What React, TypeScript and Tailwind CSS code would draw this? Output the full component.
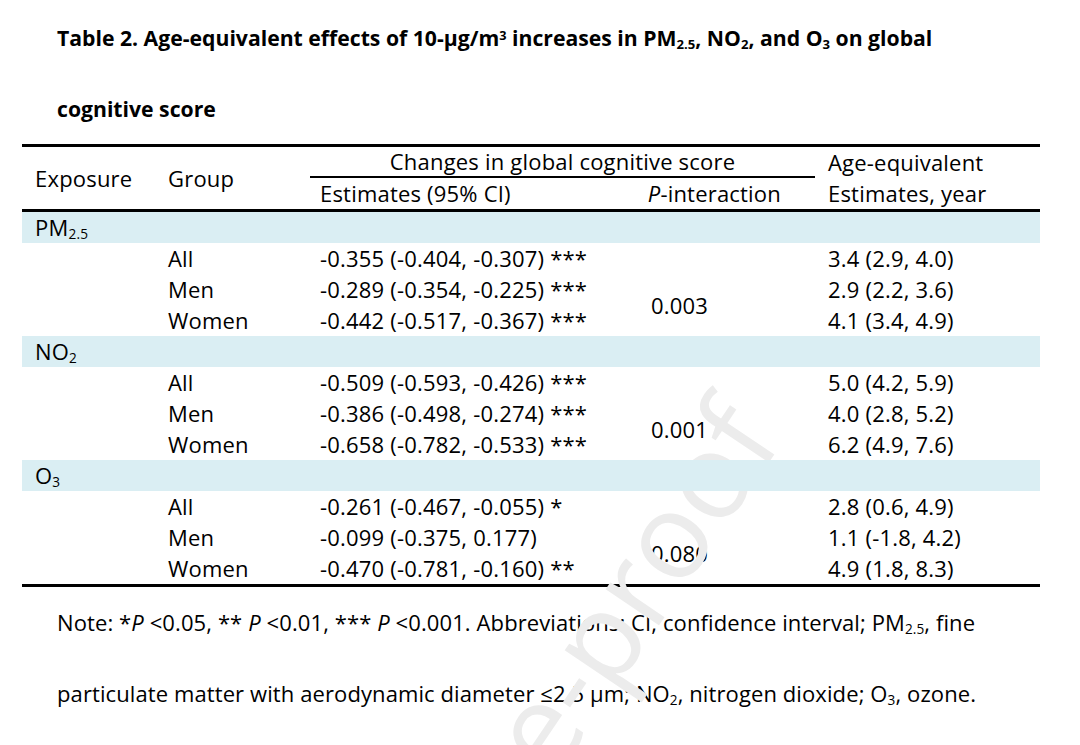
import React from "react";

const COLS = "grid grid-cols-[133px_150px_332px_178px_225px]";

type Row = { g: string; est: string; age: string };
type Section = { label: React.ReactNode; p: string; rows: Row[] };

const sections: Section[] = [
  {
    label: (
      <>
        PM<sub className="text-[0.62em]">2.5</sub>
      </>
    ),
    p: "0.003",
    rows: [
      { g: "All", est: "-0.355 (-0.404, -0.307) ***", age: "3.4 (2.9, 4.0)" },
      { g: "Men", est: "-0.289 (-0.354, -0.225) ***", age: "2.9 (2.2, 3.6)" },
      { g: "Women", est: "-0.442 (-0.517, -0.367) ***", age: "4.1 (3.4, 4.9)" },
    ],
  },
  {
    label: (
      <>
        NO<sub className="text-[0.62em]">2</sub>
      </>
    ),
    p: "0.001",
    rows: [
      { g: "All", est: "-0.509 (-0.593, -0.426) ***", age: "5.0 (4.2, 5.9)" },
      { g: "Men", est: "-0.386 (-0.498, -0.274) ***", age: "4.0 (2.8, 5.2)" },
      { g: "Women", est: "-0.658 (-0.782, -0.533) ***", age: "6.2 (4.9, 7.6)" },
    ],
  },
  {
    label: (
      <>
        O<sub className="text-[0.62em]">3</sub>
      </>
    ),
    p: "0.080",
    rows: [
      { g: "All", est: "-0.261 (-0.467, -0.055) *", age: "2.8 (0.6, 4.9)" },
      { g: "Men", est: "-0.099 (-0.375, 0.177)", age: "1.1 (-1.8, 4.2)" },
      { g: "Women", est: "-0.470 (-0.781, -0.160) **", age: "4.9 (1.8, 8.3)" },
    ],
  },
];

const ROW_START = ["row-start-2", "row-start-3", "row-start-4"];

function SectionBlock({ s }: { s: Section }) {
  return (
    <div className={`${COLS} grid-rows-[31px_31px_31px_31px]`}>
      <div className="relative z-20 col-span-5 row-start-1 bg-[#daeef3] pl-[13px] flex items-center">
        <span>{s.label}</span>
      </div>
      {s.rows.map((r, i) => (
        <React.Fragment key={r.g}>
          <div className={`col-start-2 pl-[13px] flex items-center ${ROW_START[i]}`}>
            {r.g}
          </div>
          <div
            className={`col-start-3 pl-[15px] flex items-center whitespace-nowrap ${ROW_START[i]}`}
          >
            {r.est}
          </div>
          <div
            className={`col-start-5 pl-[13px] flex items-center whitespace-nowrap ${ROW_START[i]}`}
          >
            {r.age}
          </div>
        </React.Fragment>
      ))}
      <div className="col-start-4 row-start-3 row-span-2 pl-[14px] flex items-center">
        {s.p}
      </div>
    </div>
  );
}

export default function App() {
  return (
    <div className="relative w-[1080px] h-[745px] overflow-hidden bg-white text-black font-['Open_Sans',sans-serif]">
      {/* Title */}
      <div className="pl-[57px] pt-[2px] text-[21.2px] font-bold leading-[71px] whitespace-nowrap">
        <div>
          Table 2. Age-equivalent effects of 10-μg/m
          <sup className="text-[0.6em]">3</sup> increases in PM
          <sub className="text-[0.62em]">2.5</sub>, NO
          <sub className="text-[0.62em]">2</sub>, and O
          <sub className="text-[0.62em]">3</sub> on global
        </div>
        <div>cognitive score</div>
      </div>

      {/* Table */}
      <div className="ml-[22px] w-[1018px] text-[22px] tracking-[0.2px] leading-[31px] border-t-[3px] border-black">
        <div className={`${COLS} grid-rows-[31px_31px] border-b-[3px] border-black`}>
          <div className="row-span-2 pl-[13px] flex items-center">Exposure</div>
          <div className="row-span-2 pl-[13px] flex items-center">Group</div>
          <div className="col-span-2 ml-[5px] border-b-[2px] border-black text-center flex items-center justify-center">
            Changes in global cognitive score
          </div>
          <div className="pl-[13px] flex items-center">Age-equivalent</div>
          <div className="col-start-3 row-start-2 pl-[15px] flex items-center">
            Estimates (95% CI)
          </div>
          <div className="col-start-4 row-start-2 pr-[34px] flex items-center justify-end">
            <span>
              <i>P</i>-interaction
            </span>
          </div>
          <div className="col-start-5 row-start-2 pl-[13px] flex items-center">
            Estimates, year
          </div>
        </div>
        {sections.map((s, i) => (
          <SectionBlock key={i} s={s} />
        ))}
        <div className="border-t-[3px] border-black" />
      </div>

      {/* Note */}
      <div className="pl-[57px] text-[22px] tracking-[0.1px] leading-[71px] whitespace-nowrap">
        <div>
          Note: *<i>P</i> &lt;0.05, ** <i>P</i> &lt;0.01, *** <i>P</i> &lt;0.001.
          Abbreviations: CI, confidence interval; PM
          <sub className="text-[0.62em]">2.5</sub>, fine
        </div>
        <div>
          particulate matter with aerodynamic diameter ≤2.5 μm; NO
          <sub className="text-[0.62em]">2</sub>, nitrogen dioxide; O
          <sub className="text-[0.62em]">3</sub>, ozone.
        </div>
      </div>

      {/* Watermark */}
      <svg
        className="absolute inset-0 z-10 pointer-events-none"
        width="1080"
        height="745"
        viewBox="0 0 1080 745"
      >
        <text
          x="784"
          y="440"
          textAnchor="end"
          transform="rotate(-56 784 440)"
          fontSize="120"
          fill="#ececec"
          fontFamily="'Open Sans', sans-serif"
        >
          Journal Pre-proof
        </text>
      </svg>
    </div>
  );
}
